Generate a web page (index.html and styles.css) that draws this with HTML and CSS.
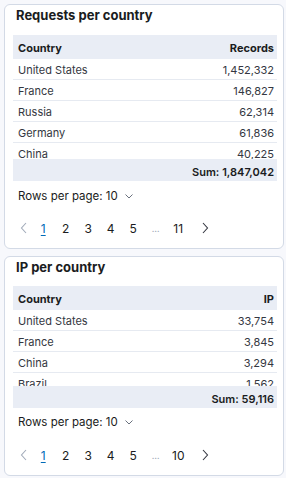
FILE: index.html
```html
<!DOCTYPE html>
<html>
<head>
<meta charset="utf-8">
<link rel="stylesheet" href="styles.css">
</head>
<body>
<div class="page">
  <section class="card card-a">
    <h2 class="title">Requests per country</h2>
    <div class="table">
      <div class="row head"><span>Country</span><span>Records</span></div>
      <div class="body body-a">
        <div class="row"><span>United States</span><span>1,452,332</span></div>
        <div class="row"><span>France</span><span>146,827</span></div>
        <div class="row"><span>Russia</span><span>62,314</span></div>
        <div class="row"><span>Germany</span><span>61,836</span></div>
        <div class="row"><span>China</span><span>40,225</span></div>
      </div>
      <div class="row sum"><span class="sum-val">Sum: 1,847,042</span></div>
    </div>
    <div class="rpp">Rows per page: 10
      <svg class="caret" width="10" height="10" viewBox="0 0 10 10"><path d="M1.5 3.5 L5 7 L8.5 3.5" fill="none" stroke="#69707d" stroke-width="1"/></svg>
    </div>
    <nav class="pager">
      <svg class="chev prev" width="10" height="14" viewBox="0 0 10 14"><path d="M7 2 L2.5 7 L7 12" fill="none" stroke="#a2abba" stroke-width="1.1"/></svg>
      <span class="pg active">1</span><span class="pg">2</span><span class="pg">3</span><span class="pg">4</span><span class="pg">5</span><span class="pg dots">…</span><span class="pg">11</span>
      <svg class="chev next" width="10" height="14" viewBox="0 0 10 14"><path d="M3 2 L7.5 7 L3 12" fill="none" stroke="#343741" stroke-width="1.1"/></svg>
    </nav>
  </section>
  <section class="card card-b">
    <h2 class="title">IP per country</h2>
    <div class="table">
      <div class="row head"><span>Country</span><span>IP</span></div>
      <div class="body body-b">
        <div class="row"><span>United States</span><span>33,754</span></div>
        <div class="row"><span>France</span><span>3,845</span></div>
        <div class="row"><span>China</span><span>3,294</span></div>
        <div class="row"><span>Brazil</span><span>1,562</span></div>
      </div>
      <div class="row sum"><span class="sum-val">Sum: 59,116</span></div>
    </div>
    <div class="rpp">Rows per page: 10
      <svg class="caret" width="10" height="10" viewBox="0 0 10 10"><path d="M1.5 3.5 L5 7 L8.5 3.5" fill="none" stroke="#69707d" stroke-width="1"/></svg>
    </div>
    <nav class="pager">
      <svg class="chev prev" width="10" height="14" viewBox="0 0 10 14"><path d="M7 2 L2.5 7 L7 12" fill="none" stroke="#a2abba" stroke-width="1.1"/></svg>
      <span class="pg active">1</span><span class="pg">2</span><span class="pg">3</span><span class="pg">4</span><span class="pg">5</span><span class="pg dots">…</span><span class="pg">10</span>
      <svg class="chev next" width="10" height="14" viewBox="0 0 10 14"><path d="M3 2 L7.5 7 L3 12" fill="none" stroke="#343741" stroke-width="1.1"/></svg>
    </nav>
  </section>
</div>
</body>
</html>
```
FILE: styles.css
```css
* { box-sizing: border-box; }
html, body { margin: 0; padding: 0; }
body {
  background: #f7f8fc;
  font-family: Inter, "Noto Sans", sans-serif;
  color: #343741;
  width: 286px;
  height: 478px;
  overflow: hidden;
}
.page {
  display: flex;
  flex-direction: column;
  gap: 7px;
  padding: 4px 2px 0 4px;
}
.card {
  background: #fff;
  border: 1px solid #d3dae6;
  border-radius: 6px;
  padding: 2px 6px 0 8px;
  display: flex;
  flex-direction: column;
}
.card-a { height: 245px; }
.card-b { height: 220px; }
.title {
  margin: 0;
  font-size: 13px;
  line-height: 16px;
  font-weight: 700;
  color: #1a1c21;
  padding-left: 3px;
}
.card-a .title { margin-bottom: 12px; }
.card-b .title { margin-bottom: 11px; }
.table { display: flex; flex-direction: column; }
.row {
  display: flex;
  justify-content: space-between;
  align-items: center;
  height: 21px;
  padding: 1px 3px 0 5px;
  font-size: 11px;
  border-bottom: 1px solid #e6eaf1;
  flex: none;
}
.head {
  height: 24px;
  background: #e9edf5;
  font-weight: 700;
  color: #1a1c21;
  border-bottom: none;
}
.body { overflow: hidden; }
.body-a { height: 100px; }
.body-b { height: 76px; }
.sum {
  height: 22px;
  background: #e9edf5;
  font-weight: 600;
  color: #1a1c21;
  border-bottom: none;
  padding-top: 3px;
  justify-content: flex-end;
}
.rpp {
  display: flex;
  align-items: center;
  gap: 6px;
  font-size: 11.5px;
  color: #1a1c21;
  padding-left: 5px;
  margin-top: 7px;
  height: 16px;
}
.card-b .rpp { margin-top: 6px; }
.pager {
  display: flex;
  align-items: center;
  margin-top: 16px;
  padding-left: 6px;
  height: 16px;
}
.card-b .pager { margin-top: 17px; }
.chev { flex: none; }
.chev.prev { margin-right: 3px; }
.chev.next { margin-left: 10px; }
.pg {
  width: 22.5px;
  text-align: center;
  font-size: 12px;
  color: #1a1c21;
}
.pg.active { color: #006bb8; text-decoration: underline; text-underline-offset: 2px; }
.pg.dots { color: #a2abba; font-size: 9px; }
```
